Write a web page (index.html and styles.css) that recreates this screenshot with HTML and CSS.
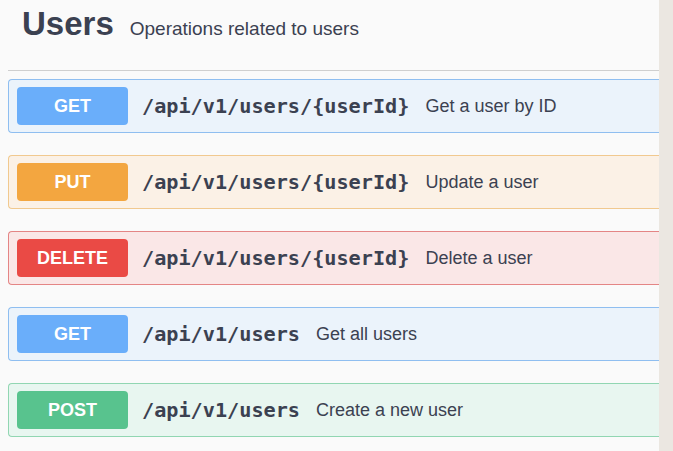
FILE: index.html
```html
<!DOCTYPE html>
<html>
<head>
<meta charset="utf-8">
<link rel="stylesheet" href="styles.css">
</head>
<body>
<div class="page">
  <main class="main">
    <header class="tag">
      <h2 class="tag-name">Users</h2>
      <span class="tag-desc">Operations related to users</span>
    </header>
    <div class="ops">
      <div class="op op-get">
        <span class="method">GET</span>
        <span class="path">/api/v1/users/{userId}</span>
        <span class="summary">Get a user by ID</span>
      </div>
      <div class="op op-put">
        <span class="method">PUT</span>
        <span class="path">/api/v1/users/{userId}</span>
        <span class="summary">Update a user</span>
      </div>
      <div class="op op-delete">
        <span class="method">DELETE</span>
        <span class="path">/api/v1/users/{userId}</span>
        <span class="summary">Delete a user</span>
      </div>
      <div class="op op-get">
        <span class="method">GET</span>
        <span class="path">/api/v1/users</span>
        <span class="summary">Get all users</span>
      </div>
      <div class="op op-post">
        <span class="method">POST</span>
        <span class="path">/api/v1/users</span>
        <span class="summary">Create a new user</span>
      </div>
    </div>
  </main>
  <aside class="side"></aside>
</div>
</body>
</html>
```
FILE: styles.css
```css
html, body {
  margin: 0;
  padding: 0;
  height: 100%;
}
body {
  background: #fafafa;
  font-family: "Liberation Sans", Arial, sans-serif;
  color: #3b4151;
  overflow: hidden;
}
.page {
  display: flex;
  height: 451px;
}
.main {
  width: 659px;
  flex: none;
  padding-left: 8px;
  box-sizing: border-box;
  overflow: hidden;
}
.side {
  flex: 1;
  background: #ebe7e1;
}
.tag {
  display: flex;
  align-items: baseline;
  height: 71px;
  box-sizing: border-box;
  padding: 5px 0 0 14px;
  border-bottom: 1px solid #cfcfcf;
}
.tag-name {
  margin: 0;
  font-size: 33px;
  line-height: 38px;
  font-weight: bold;
  color: #3b4151;
}
.tag-desc {
  margin-left: 16px;
  font-size: 19px;
  color: #3b4151;
}
.ops {
  display: flex;
  flex-direction: column;
  gap: 22px;
  padding-top: 8px;
}
.op {
  display: flex;
  align-items: center;
  height: 54px;
  box-sizing: border-box;
  padding: 0 8px;
  border: 1px solid;
  border-right: none;
  border-radius: 4px 0 0 4px;
  white-space: nowrap;
}
.method {
  flex: none;
  width: 111px;
  height: 38px;
  border-radius: 4px;
  display: flex;
  align-items: center;
  justify-content: center;
  color: #fff;
  font-weight: bold;
  font-size: 18px;
}
.path {
  margin-left: 14px;
  font-family: "DejaVu Sans Mono", monospace;
  font-weight: bold;
  font-size: 20.2px;
  color: #3b4151;
}
.summary {
  margin-left: 16px;
  font-size: 18px;
  color: #3b4151;
}
.op-get { background: #ebf3fb; border-color: #8fbef0; }
.op-get .method { background: #6aaefa; }
.op-put { background: #fbf1e6; border-color: #f1c98f; }
.op-put .method { background: #f3a640; }
.op-delete { background: #fae7e7; border-color: #e48585; }
.op-delete .method { background: #ea4a45; }
.op-post { background: #e8f6f0; border-color: #91d6b2; }
.op-post .method { background: #58c38e; }
```
